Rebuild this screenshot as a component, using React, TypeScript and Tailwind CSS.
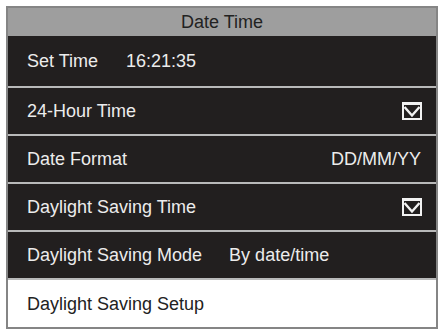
import React from "react";

const Check = () => (
  <svg width="20" height="18" viewBox="0 0 20 18" className="block">
    <rect x="1" y="1" width="18" height="16" fill="none" stroke="#f2f2f2" strokeWidth="2" />
    <rect x="0" y="0" width="20" height="3" fill="#f2f2f2" />
    <path d="M2.5 5 L10 13.5 L17.5 5" fill="none" stroke="#f2f2f2" strokeWidth="2.4" strokeLinejoin="miter" />
  </svg>
);

const Sep = () => <div className="h-[2px] bg-[#b9b9b9]" />;

export default function App() {
  return (
    <div className="w-[443px] h-[331px] bg-white pl-[6px] pt-[6px]" style={{ fontFamily: '"Liberation Sans", Arial, sans-serif' }}>
      <div className="w-[432px] border-2 border-[#858585] flex flex-col text-[18px] leading-none">
        <div className="h-[28px] bg-[#9e9e9e] text-[#222] flex items-center justify-center">Date Time</div>
        <div className="h-[50px] bg-[#221f1f] text-[#ececec] flex items-center pl-[19px] pr-[14px]">
          <span>Set Time</span>
          <span className="ml-[28px]">16:21:35</span>
        </div>
        <Sep />
        <div className="h-[46px] bg-[#221f1f] text-[#ececec] flex items-center justify-between pl-[19px] pr-[14px]">
          <span>24-Hour Time</span>
          <Check />
        </div>
        <Sep />
        <div className="h-[46px] bg-[#221f1f] text-[#ececec] flex items-center justify-between pl-[19px] pr-[15px]">
          <span>Date Format</span>
          <span>DD/MM/YY</span>
        </div>
        <Sep />
        <div className="h-[46px] bg-[#221f1f] text-[#ececec] flex items-center justify-between pl-[19px] pr-[14px]">
          <span>Daylight Saving Time</span>
          <Check />
        </div>
        <Sep />
        <div className="h-[46px] bg-[#221f1f] text-[#ececec] flex items-center pl-[19px] pr-[14px]">
          <span>Daylight Saving Mode</span>
          <span className="ml-[27px]">By date/time</span>
        </div>
        <Sep />
        <div className="h-[47px] bg-white text-[#222] flex items-center pl-[19px]">
          <span>Daylight Saving Setup</span>
        </div>
      </div>
    </div>
  );
}
